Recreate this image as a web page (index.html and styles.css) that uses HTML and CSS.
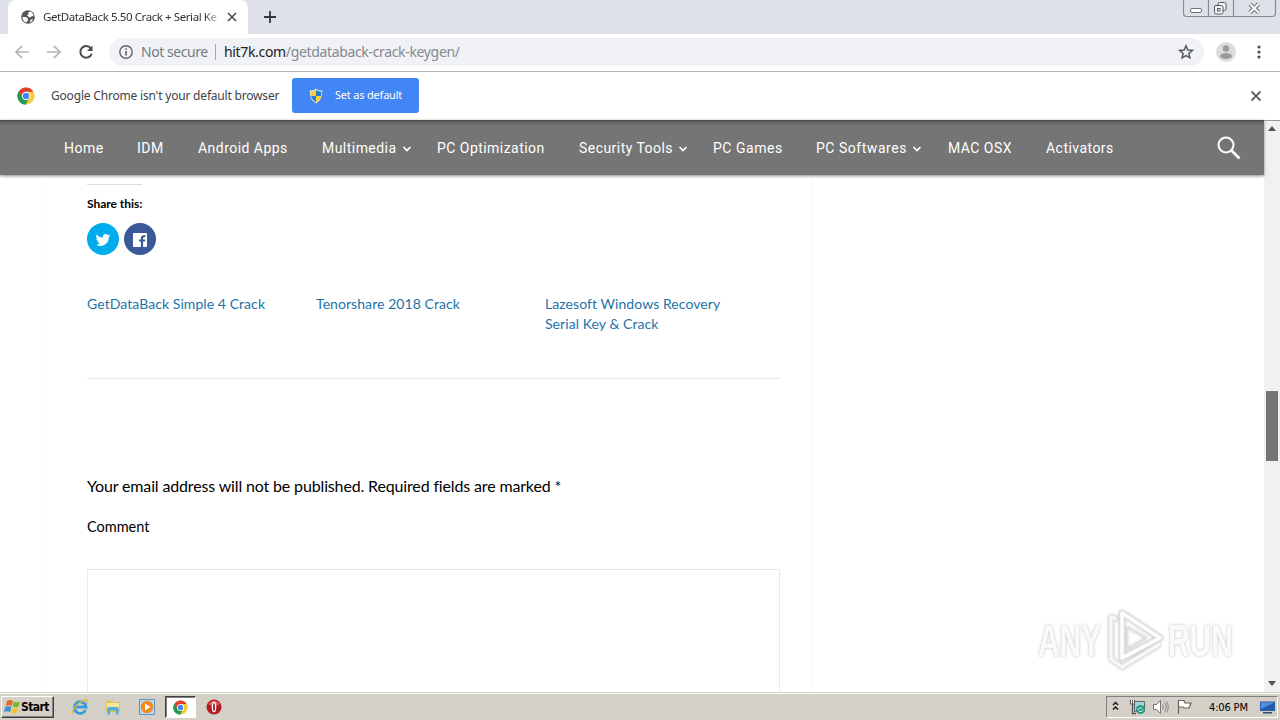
FILE: index.html
```html
<!DOCTYPE html>
<html lang="en">
<head>
<meta charset="utf-8">
<title>GetDataBack 5.50 Crack + Serial Key</title>
<link rel="stylesheet" href="styles.css">
</head>
<body>
<svg class="defs" width="0" height="0">
  <symbol id="chrome" viewBox="0 0 18 18">
    <circle cx="9" cy="9" r="8.5" fill="#fbc935"/>
    <path d="M9 9 1.6 4.8A8.5 8.5 0 0 1 16.4 4.8H9Z" fill="#df3e30"/>
    <path d="M1.6 4.8A8.5 8.5 0 0 0 8.5 17.5L12.5 11 5.5 11Z" fill="#1f9b55"/>
    <path d="M1.6 4.8 5.6 11 9 9 9 4.8Z" fill="#df3e30"/>
    <path d="M1.6 4.8 5.4 11.1 9 13 8.5 17.5A8.5 8.5 0 0 1 1.6 4.8Z" fill="#1f9b55"/>
    <circle cx="9" cy="9" r="4.2" fill="#fff"/><circle cx="9" cy="9" r="3.2" fill="#4285f4"/>
  </symbol>
  <symbol id="chevron" viewBox="0 0 10 8"><path d="M1.5 2 5 5.5 8.5 2" fill="none" stroke="#fff" stroke-width="1.7"/></symbol>
</svg>
<div class="screen">
  <header class="tabstrip">
    <div class="tab">
      <svg class="globe" width="14" height="14" viewBox="0 0 14 14"><circle cx="7" cy="7" r="6.8" fill="#53575c"/><path d="M1.4 7.1h3.5l2 1.5v2L5 12.6C2.8 11.9 1.4 9.8 1.4 7.1ZM7 2.5l2.5-.9c1.9.8 3 2.6 3.1 5L11 5.7 9.5 7.5 7.5 6.8 6 5.2 7.6 4ZM8.5 12.4l1.3-2.8 2.3-.4C11.4 11 10.2 12 8.5 12.4Z" fill="#fff"/></svg>
      <span class="tab-title">GetDataBack 5.50 Crack + Serial Ke</span>
      <svg width="10" height="10" viewBox="0 0 10 10"><path d="M1 1 9 9M9 1 1 9" stroke="#50545a" stroke-width="1.7"/></svg>
    </div>
    <svg class="newtab" width="14" height="14" viewBox="0 0 14 14"><path d="M7 1v12M1 7h12" stroke="#34383d" stroke-width="1.8"/></svg>
    <svg class="winbtns" width="94" height="18" viewBox="0 0 94 18" fill="none" stroke="#858b98">
      <path d="M.5 0V13.500Q.5 16.500 3.500 16.500H89Q92.500 16.500 92.500 13V0M25.500 0V16.500M50.500 0V16.500" stroke-width="1.2"/>
      <rect x="7.500" y="8.500" width="11" height="4" rx="1.500" fill="#fff" stroke="#6b707a"/>
      <g stroke="#555a64" fill="#f4f5f7"><rect x="35" y="2.500" width="8" height="8" rx="1.500"/><rect x="31.500" y="5.500" width="8.500" height="8.500" rx="1.500"/><rect x="34.500" y="8.500" width="2.500" height="2.500"/></g>
      <path d="m67 4 8.500 8.500M75.500 4 67 12.500" stroke="#6b707a" stroke-width="4"/><path d="m67 4 8.500 8.500M75.500 4 67 12.500" stroke="#fff" stroke-width="2"/>
    </svg>
  </header>

  <div class="toolbar">
    <svg width="96" height="16" viewBox="0 0 96 16" fill="none" stroke="#b3b5b8" stroke-width="1.7"><path d="M14 8H1M7.200 1.800 1 8l6.200 6.200M32 8h13M38.800 1.800 45 8l-6.200 6.200"/><path d="M75.800 4.300A5.800 5.800 0 1 0 76.700 9.700" stroke="#494d52" stroke-width="2"/><path d="M77.500 1.500V7H72Z" fill="#494d52" stroke="none"/></svg>
    <div class="omnibox">
      <svg width="14" height="14" viewBox="0 0 14 14" fill="none" stroke="#5f6368" stroke-width="1.400"><circle cx="7" cy="7" r="6.200"/><path d="M7 6v4.500M7 3.300v1.500" stroke-width="1.600"/></svg>
      <span class="secure">Not secure</span><i class="sep"></i>
      <span class="url"><b>hit7k.com</b>/getdataback-crack-keygen/</span>
      <svg class="star" width="16" height="16" viewBox="0 0 16 16"><path d="m8 1.800 1.800 4.200 4.500.4-3.400 3 1 4.400L8 11.500l-3.900 2.300 1-4.400-3.400-3L6.200 6Z" fill="none" stroke="#54585d" stroke-width="1.500"/></svg>
    </div>
    <svg class="avatar" width="20" height="20" viewBox="0 0 20 20"><circle cx="10" cy="10" r="10" fill="#dcdcdc"/><circle cx="10" cy="6.500" r="3.200" fill="#9b9b9b"/><ellipse cx="10" cy="14" rx="6" ry="3" fill="#9b9b9b"/></svg>
    <svg width="4" height="14" viewBox="0 0 4 14" fill="#4b4f54"><circle cx="2" cy="2" r="1.600"/><circle cx="2" cy="7" r="1.600"/><circle cx="2" cy="12" r="1.600"/></svg>
  </div>

  <div class="infobar">
    <svg width="18" height="18"><use href="#chrome"/></svg>
    <span class="info-text">Google Chrome isn't your default browser</span>
    <div class="default-btn">
      <svg width="14" height="16" viewBox="0 0 14 16"><path d="M7 .5 9 2l4.300.5Q13.500 12 7 15.500 .5 12 .7 2.500L5 2Z" fill="#e9e6c8"/><path d="M7 2v6H2Q1.500 5.500 1.800 3.400Q5 3.500 7 2Z" fill="#f6d02f"/><path d="M7 2q2 1.500 5.200 1.400Q12.500 6 12 8H7Z" fill="#2f7bcf"/><path d="M2 8h5v6.300Q3 12 2 8Z" fill="#2f7bcf"/><path d="M7 8h5q-1 4-5 6.300Z" fill="#f6d02f"/></svg>
      <span>Set as default</span>
    </div>
    <svg class="info-close" width="12" height="12" viewBox="0 0 12 12"><path d="m1.500 1.500 9 9M10.500 1.500l-9 9" stroke="#63666a" stroke-width="1.900"/></svg>
  </div>

  <div class="viewport">
    <main class="page">
      <nav class="nav">
        <span>Home</span><span>IDM</span><span>Android Apps</span>
        <span>Multimedia<svg class="chev" width="10" height="8"><use href="#chevron"/></svg></span>
        <span>PC Optimization</span>
        <span>Security Tools<svg class="chev" width="10" height="8"><use href="#chevron"/></svg></span>
        <span class="wide">PC Games</span>
        <span class="wide">PC Softwares<svg class="chev" width="10" height="8"><use href="#chevron"/></svg></span>
        <span>MAC OSX</span><span>Activators</span>
        <svg class="search" width="24" height="24" viewBox="0 0 24 24" fill="none" stroke="#fff"><circle cx="9" cy="9" r="7.500" stroke-width="2"/><path d="m14.500 14.500 8 8" stroke-width="2.600"/></svg>
      </nav>
      <article class="content">
        <div class="share-rule"></div>
        <div class="share-title">Share this:</div>
        <div class="share">
          <span class="round twitter"><svg width="16" height="16" viewBox="0 0 24 24" fill="#fff"><path d="M23 5.200a9 9 0 0 1-2.600.7 4.500 4.500 0 0 0 2-2.500 9 9 0 0 1-2.900 1.100 4.500 4.500 0 0 0-7.700 4.100A12.800 12.800 0 0 1 2.500 3.900a4.500 4.500 0 0 0 1.400 6 4.500 4.500 0 0 1-2-.6c0 2.200 1.500 4.100 3.600 4.500a4.500 4.500 0 0 1-2 .1 4.500 4.500 0 0 0 4.200 3.100A9 9 0 0 1 1 18.900a12.800 12.800 0 0 0 19.700-11.400A9 9 0 0 0 23 5.200Z"/></svg></span>
          <span class="round facebook"><svg width="14" height="14" viewBox="0 0 14 14"><path fill="#fff" fill-rule="evenodd" d="M.8 0H13.200Q14 0 14 .8V13.200Q14 14 13.200 14H10.100V8.600H12L12.300 6.500H10.100V5.200Q10.100 4.200 11.200 4.200H12.400V2.200H10.500Q7.900 2.200 7.900 4.900V6.500H6V8.600H7.900V14H.8Q0 14 0 13.200V.8Q0 0 .8 0Z"/></svg></span>
        </div>
        <div class="related"><a>GetDataBack Simple 4 Crack</a><a>Tenorshare 2018 Crack</a><a>Lazesoft Windows Recovery<br>Serial Key &amp; Crack</a></div>
        <div class="notice">Your email address will not be published. Required fields are marked *</div>
        <div class="label">Comment</div>
        <div class="textarea"></div>
      </article>
    </main>
    <div class="scrollbar"><i class="up"></i><i class="thumb"></i><i class="down"></i></div>
    <div class="watermark">
      <span class="any">ANY</span>
      <svg width="58" height="64" viewBox="0 0 58 64" fill="none" stroke-linejoin="round"><path d="M12 10 5 8V50L16 58 54 35" stroke="#e3e3e3" stroke-width="5"/><path d="M16 4V49L54 29Z" stroke="#dedede" stroke-width="6"/><path d="M16 4V49L54 29Z" stroke="#fdfdfd" stroke-width="3.500"/><path d="M21 18V40L40 29Z" stroke="#dfdfdf" stroke-width="1.500"/><path d="M10 10 5 8V50L16 58 54 35" stroke="#f8f8f8" stroke-width="3"/></svg>
      <span class="run">RUN</span>
    </div>
  </div>

  <footer class="taskbar">
    <div class="start"><svg width="17" height="16" viewBox="0 0 17 16"><path d="M3 2q3-2 6 0L7.700 7q-3-1.600-6 0Z" fill="#e8642b"/><path d="M10 2.500q3 1.500 6 0L14.600 7.500q-3 1.500-6 0Z" fill="#76b82e"/><path d="M1.400 8q3-1.600 6 0L6 13q-3-1.600-6 0Z" fill="#398fd6"/><path d="M8.300 8.500q3 1.500 6 0L13 13.500q-3 1.500-6 0Z" fill="#f5c52b"/></svg><span>Start</span></div>
    <div class="quick">
      <svg width="18" height="18" viewBox="0 0 18 18" fill="none"><path d="M14.500 12A5.800 5.800 0 1 1 15 9H5" stroke="#369ddb" stroke-width="2.800"/><path d="M1.500 16C0 12 9 2 15.500 2q2 0 .8 3.500" stroke="#e4b83a" stroke-width="1.300"/></svg>
      <svg width="18" height="18" viewBox="0 0 18 18"><path d="M2 2.500h5l1 1.500h8v10H2Z" fill="#dfc05a"/><path d="M3 5h12v6H3Z" fill="#f7e79a"/><path d="M3.500 16.500v-6q0-1.500 1.500-1.500h8q1.500 0 1.500 1.500v6H12v-4H6v4Z" fill="#55acd8"/></svg>
      <svg width="18" height="18" viewBox="0 0 18 18"><path d="M1.500 1.500h15v15h-15Z" fill="#b8d9ef" stroke="#5c96c4"/><circle cx="9" cy="9" r="6.200" fill="#f28a1e"/><path d="m7 5.500 5.500 3.500L7 12.500Z" fill="#fff"/></svg>
      <div class="active-task"><svg width="15" height="15"><use href="#chrome"/></svg></div>
      <svg width="16" height="16" viewBox="0 0 16 16"><circle cx="8" cy="8" r="7.500" fill="#b51b20"/><path d="M2 5Q8-2 14 5 8 9 2 5Z" fill="#db5c59"/><ellipse cx="8" cy="8" rx="2.300" ry="5.300" fill="#fff"/><ellipse cx="8" cy="8" rx=".9" ry="4" fill="#9b1015"/></svg>
    </div>
    <div class="tray">
      <svg class="t-up" width="7" height="10" viewBox="0 0 7 10" fill="none" stroke="#111" stroke-width="1.400"><path d="m1 4 2.500-2.500L6 4M1 8.500 3.500 6 6 8.500"/></svg>
      <svg class="t-net" width="17" height="16" viewBox="0 0 17 16"><path d="M5.500 2.500h10v10h-10Z" fill="#a5d3d6" stroke="#56646b"/><path d="M1.500 1v4h4V1M3.500 1v4" fill="#fff" stroke="#555"/><path d="M3.500 5v9.500H7" fill="none" stroke="#555" stroke-width="1.300"/><circle cx="11.500" cy="10.500" r="4.500" fill="#299b87"/><path d="M9 11q1-3 4-2M14 10.500q-1 3-4 2" fill="none" stroke="#d7f3e8"/></svg>
      <svg class="t-vol" width="17" height="16" viewBox="0 0 17 16"><path d="M1.500 5.500h3l4-4v13l-4-4h-3Z" fill="#fff" stroke="#777"/><path d="M10.500 5.500q2 2.500 0 5M12.500 3.500q3.500 4.500 0 9M14.500 2.500q3.500 5.500 0 11" fill="none" stroke="#858585"/></svg>
      <svg class="t-flag" width="16" height="16" viewBox="0 0 16 16"><path d="M2.500 15V1.500H8L9 4h6l-2 5H8L7 8H2.500" fill="#fff" stroke="#66645f" stroke-width="1.200"/></svg>
      <span class="clock">4:06 PM</span>
      <svg class="t-desk" width="15" height="13" viewBox="0 0 15 13"><path d="M0 .5H15V10H0Z" fill="#245cae"/><path d="M1 1.500H14L1 8Z" fill="#5791dc"/><path d="M3 11h9v1.500H3Z" fill="#374b68"/></svg>
    </div>
  </footer>
</div>
</body>
</html>
```

FILE: styles.css
```css
* { box-sizing: border-box; }
body { margin: 0; overflow: hidden; font-family: "DejaVu Sans Condensed", "DejaVu Sans", sans-serif; }
svg { display: block; flex: none; }
.defs { position: absolute; }
.screen { width: 1280px; height: 720px; display: flex; flex-direction: column; background: #fff; }
span, a { white-space: nowrap; }

.tabstrip { height: 34px; flex: none; background: #dee1e7; display: flex; align-items: flex-start; padding-left: 8px; }
.tab { width: 240px; height: 34px; background: #fff; border-radius: 8px 8px 0 0; display: flex; align-items: center; padding: 0 0 0 13px; }
.tab-title { width: 176px; margin: -2px 8px 0 8px; font-family: "Noto Sans", sans-serif; font-size: 11.5px; letter-spacing: -.42px; color: #333; -webkit-mask-image: linear-gradient(90deg, #000 162px, transparent 178px); }
.newtab { margin: 10px 0 0 15px; }
.winbtns { margin: 0 3px 0 auto; }

.toolbar { height: 38px; flex: none; border-bottom: 1px solid #b4b5b8; display: flex; align-items: center; padding: 0 0 1px 15px; }
.omnibox { width: 1095px; height: 28px; margin: 0 0 0 -2px; border-radius: 14px; background: #f0f2f5; display: flex; align-items: center; padding: 0 10px; font-family: "Noto Sans", sans-serif; font-size: 14px; color: #777b80; }
.omnibox span { margin-top: -1px; }
.omnibox .secure { width: 67px; margin-left: 8px; letter-spacing: -.45px; }
.sep { width: 1px; height: 16px; margin: 0 8px 0 7px; background: #a2a5a9; }
.url { letter-spacing: -.34px; color: #85888d; }
.url b { font-weight: 400; color: #222; }
.star { margin-left: auto; }
.avatar { margin: 0 21px 0 12px; }

.infobar { height: 48px; flex: none; display: flex; align-items: center; padding: 0 0 1px 17px; }
.info-text { width: 229px; margin: -1px 12px 0 16px; font-family: "Noto Sans", sans-serif; font-size: 12px; letter-spacing: -.19px; color: #3f4247; }
.default-btn { width: 127px; height: 35px; border-radius: 3px; background: #4285f4; color: #fff; display: flex; align-items: center; gap: 12px; padding-left: 17px; font-family: "Noto Sans", sans-serif; font-size: 11px; letter-spacing: -.2px; }
.default-btn span { margin-top: -2px; }
.info-close { margin: 1px 18px 0 auto; }

.viewport { position: relative; height: 572px; flex: none; display: flex; }
.page { width: 1264px; }
.nav { position: relative; z-index: 1; height: 55px; padding: 0 25px 0 64px; display: grid; grid-template-columns: 73px 61px 124px 115px 142px 134px 103px 132px 98px 171px 24px; align-items: center; background: linear-gradient(#424242 0, #666 2px, #757575 6px); box-shadow: 0 1px 3px #888; color: #fff; font: 14px Roboto, sans-serif; letter-spacing: .46px; }
.nav span { display: flex; align-items: center; padding-top: 1px; }
.nav .wide { letter-spacing: .53px; }
.chev { margin: 2px 0 0 5px; }
.search { margin-top: 0; }
.content { width: 767px; height: 517px; margin-left: 45px; padding: 9px 31px 0 41px; border: solid #fafafa; border-width: 0 1px; font-family: Lato, sans-serif; color: #000; overflow: hidden; }
.share-rule { width: 55px; height: 1px; background: #ddd; }
.share-title { height: 38px; padding-top: 11px; font-size: 12px; font-weight: 700; line-height: 16px; letter-spacing: -.04px; }
.share { display: flex; gap: 5px; }
.round { width: 32px; height: 32px; border-radius: 50%; display: flex; align-items: center; justify-content: center; padding-top: 2px; }
.twitter { background: #00aced; }
.facebook { background: #3b5998; }
.related { height: 124px; padding-top: 39px; display: grid; grid-template-columns: 229px 229px 1fr; border-bottom: 1px solid #eaeaea; color: #1e73a9; font-size: 14px; line-height: 20px; letter-spacing: .07px; }
.notice { margin-top: 95px; height: 24px; font-size: 16px; line-height: 24px; letter-spacing: -.15px; }
.label { margin-top: 17px; height: 24px; font-size: 14.5px; line-height: 24px; }
.textarea { margin-top: 30px; height: 140px; border: 1px solid #e9e9e9; }

.scrollbar { width: 16px; height: 572px; background: #f1f1f1; border-top: 1px solid #999; display: flex; flex-direction: column; align-items: center; }
.up, .down { border: solid transparent; border-width: 0 4px; }
.up { margin-top: 5px; border-bottom: 5px solid #505050; }
.thumb { width: 12px; height: 70px; margin: 260px 0 0 0; background: #757575; }
.down { margin-top: 220px; border-top: 5px solid #505050; }

.watermark { position: absolute; left: 1038px; top: 489px; display: flex; align-items: center; color: #fafafa; font: 700 44px "Liberation Sans", sans-serif; filter: drop-shadow(0 0 1.5px #c2c2c2); }
.watermark span { width: 66px; transform: scaleX(.68); transform-origin: 0 50%; }
.watermark svg { margin: 0 4px 0 2px; }

.taskbar { height: 28px; flex: none; display: flex; align-items: center; padding: 2px 0 0 1px; background: linear-gradient(#d4d0c8 0 1px, #fff 1px 2px, #d4d0c8 2px); }
.start { width: 53px; height: 22px; display: flex; align-items: center; padding-left: 2px; border: 1px solid; border-color: #fff #404040 #404040 #fff; box-shadow: inset -1px -1px #808080; font-size: 12px; font-weight: 700; letter-spacing: -.55px; color: #000; }
.quick { display: flex; align-items: center; margin-left: 17px; }
.quick > svg:nth-child(2) { margin-left: 15px; }
.quick > svg:nth-child(3) { margin-left: 16px; }
.active-task { width: 31px; height: 22px; margin: 0 10px 0 9px; background: #fff; border: 1px solid; border-color: #404040 #fff #fff #404040; box-shadow: inset 1px 1px #808080; display: flex; align-items: center; justify-content: center; }
.tray { width: 172px; height: 22px; margin: 0 2px 0 auto; border: 1px solid; border-color: #808080 #fff #fff #808080; display: flex; align-items: center; padding-left: 5px; }
.t-up { margin-top: -3px; }
.t-net { margin-left: 10px; }
.t-vol { margin-left: 6px; }
.t-flag { margin-left: 7px; }
.clock { width: 41px; margin-left: 17px; font-size: 11px; letter-spacing: -.15px; color: #000; }
.t-desk { margin-left: 10px; }
```
